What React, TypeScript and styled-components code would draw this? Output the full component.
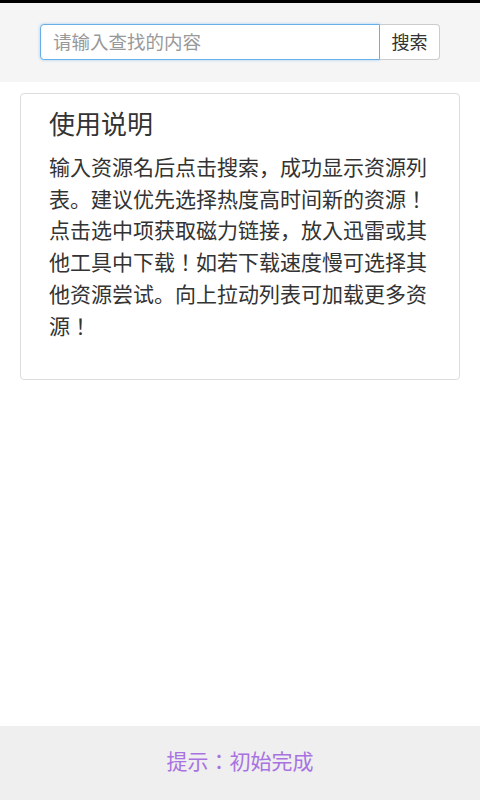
import React, { useState } from "react";
import styled, { createGlobalStyle } from "styled-components";

const GlobalStyle = createGlobalStyle`
  * {
    box-sizing: border-box;
  }
  html,
  body {
    margin: 0;
    padding: 0;
    background: #fff;
    font-family: "Noto Sans CJK JP", "Noto Sans CJK SC", "Noto Sans", sans-serif;
  }
`;

const Page = styled.div`
  width: 480px;
  height: 800px;
  display: flex;
  flex-direction: column;
  border-top: 3px solid #000;
  background: #fff;
`;

const Header = styled.div`
  height: 79px;
  background: #f5f5f5;
  padding: 21px 40px 0 40px;
`;

const SearchGroup = styled.form`
  display: flex;
  height: 36px;
`;

const SearchInput = styled.input`
  flex: 1;
  min-width: 0;
  height: 36px;
  padding: 0 12px 3px 12px;
  border: 1px solid #66afe9;
  border-radius: 4px 0 0 4px;
  box-shadow: 0 0 3px rgba(102, 175, 233, 0.6);
  font-family: inherit;
  font-size: 18.5px;
  color: #333;
  background: #fff;
  outline: none;

  &::placeholder {
    color: #999;
  }
`;

const SearchButton = styled.button`
  width: 60px;
  height: 36px;
  border: 1px solid #ccc;
  border-left: none;
  border-radius: 0 4px 4px 0;
  background: #fff;
  font-family: inherit;
  font-size: 18px;
  color: #333;
  padding: 0 0 3px 0;
`;

const Content = styled.main`
  flex: 1;
  padding: 11px 20px 0 20px;
`;

const Card = styled.section`
  border: 1px solid #ddd;
  border-radius: 4px;
  padding: 14px 28px 38px 28px;
  background: #fff;
`;

const Title = styled.h3`
  margin: 0 0 13px 0;
  font-size: 26px;
  line-height: 30px;
  font-weight: 400;
  color: #333;
`;

const Body = styled.p`
  margin: 0;
  font-size: 21px;
  line-height: 31.7px;
  color: #333;
`;

const Footer = styled.footer`
  height: 74px;
  padding-bottom: 6px;
  background: #efeff0;
  display: flex;
  align-items: center;
  justify-content: center;
  font-size: 21px;
  color: #a873e0;
`;

export default function App() {
  const [keyword, setKeyword] = useState("");

  return (
    <>
      <GlobalStyle />
      <Page>
        <Header>
          <SearchGroup onSubmit={(e) => e.preventDefault()}>
            <SearchInput
              value={keyword}
              onChange={(e) => setKeyword(e.target.value)}
              placeholder="请输入查找的内容"
            />
            <SearchButton type="submit">搜索</SearchButton>
          </SearchGroup>
        </Header>
        <Content>
          <Card>
            <Title>使用说明</Title>
            <Body>
              输入资源名后点击搜索，成功显示资源列表。建议优先选择热度高时间新的资源！点击选中项获取磁力链接，放入迅雷或其他工具中下载！如若下载速度慢可选择其他资源尝试。向上拉动列表可加载更多资源！
            </Body>
          </Card>
        </Content>
        <Footer>提示：初始完成</Footer>
      </Page>
    </>
  );
}
